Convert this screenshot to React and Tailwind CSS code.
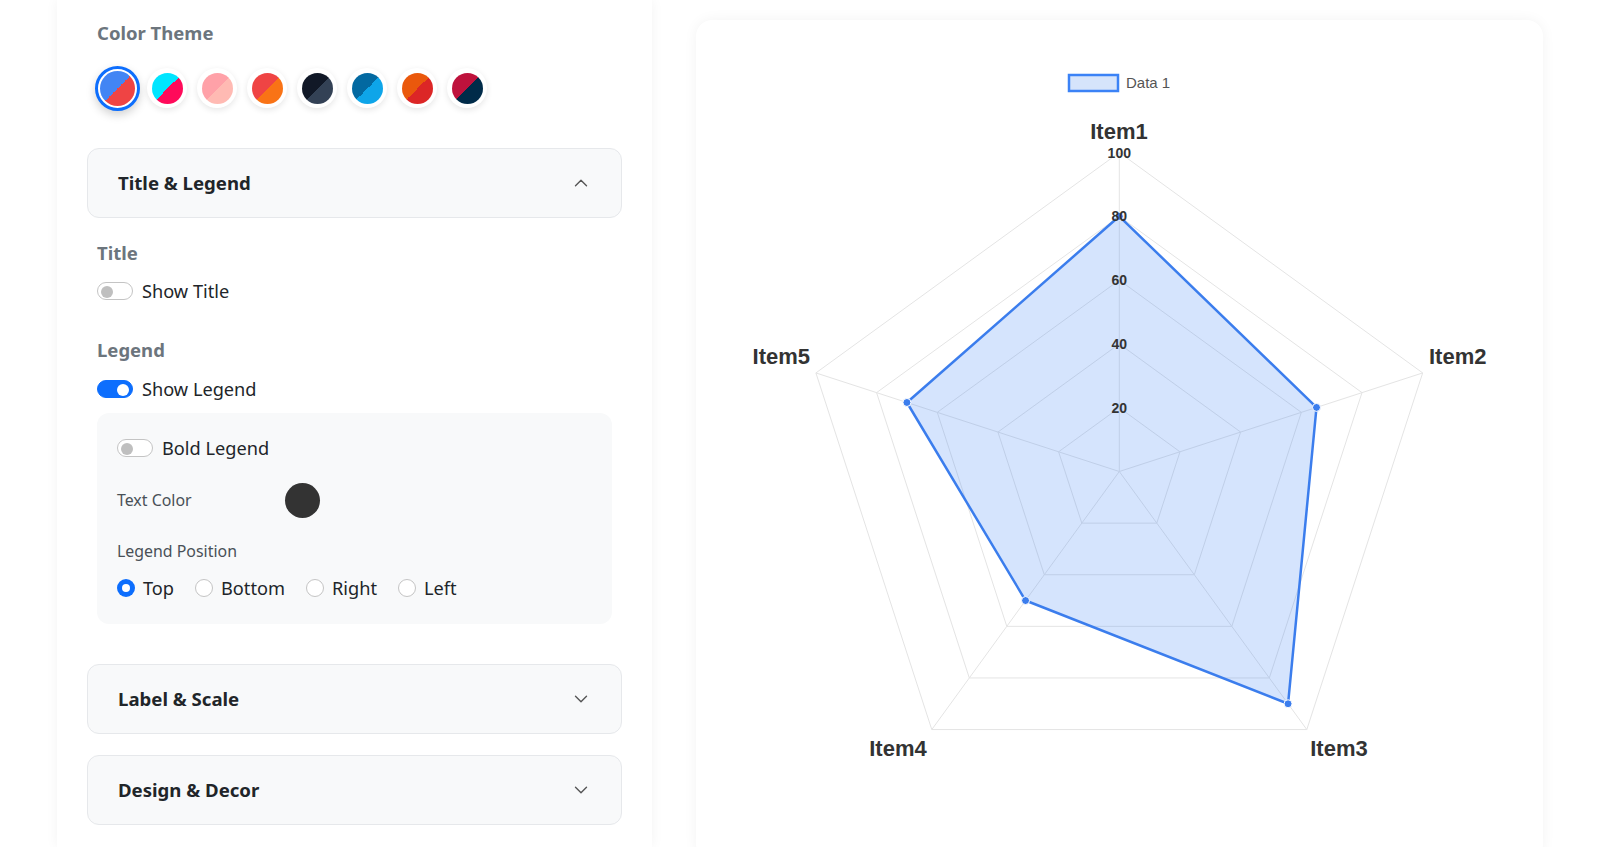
import { ChevronDown, ChevronUp } from 'lucide-react';

const swatches = [
  'bg-[linear-gradient(135deg,#4285f4_50%,#ef4444_50%)]',
  'bg-[linear-gradient(135deg,#00e5ff_50%,#ff0a5a_50%)]',
  'bg-[linear-gradient(135deg,#ffa1a8_50%,#ffbab3_50%)]',
  'bg-[linear-gradient(135deg,#ef4444_50%,#f97316_50%)]',
  'bg-[linear-gradient(135deg,#111827_50%,#334155_50%)]',
  'bg-[linear-gradient(135deg,#0369a1_50%,#0ea5e9_50%)]',
  'bg-[linear-gradient(135deg,#ea580c_50%,#dc2626_50%)]',
  'bg-[linear-gradient(135deg,#be123c_50%,#002b49_50%)]',
];

const Toggle = ({ on }) => (
  <span
    className={`relative inline-block w-[36px] h-[18px] rounded-full border shrink-0 ${
      on ? 'bg-[#0d6efd] border-[#0d6efd]' : 'bg-white border-[#c4c4c4]'
    }`}
  >
    <span
      className={`absolute top-[2.5px] w-[12px] h-[12px] rounded-full ${
        on ? 'right-[3px] bg-white' : 'left-[3px] bg-[#bfbfbf]'
      }`}
    />
  </span>
);

const Radio = ({ checked, label }) => (
  <label className="flex items-center gap-[8px]">
    {checked ? (
      <span className="w-[18px] h-[18px] rounded-full bg-[#0d6efd] flex items-center justify-center">
        <span className="w-[8px] h-[8px] rounded-full bg-white" />
      </span>
    ) : (
      <span className="w-[18px] h-[18px] rounded-full border border-[#c4c4c4] bg-white" />
    )}
    <span className="text-[18.2px] leading-[26px] text-[#212529]">{label}</span>
  </label>
);

const AccordionHeader = ({ title, open }) => (
  <div className="h-[70px] rounded-[12px] border border-[#e6e8eb] bg-[#f8f9fa] flex items-center justify-between pl-[30px] pr-[29px]">
    <span className="text-[18.6px] font-bold text-[#212529]">{title}</span>
    {open ? (
      <ChevronUp size={22} strokeWidth={1.5} className="text-[#555]" />
    ) : (
      <ChevronDown size={22} strokeWidth={1.5} className="text-[#555]" />
    )}
  </div>
);

// radar chart geometry, card-local coords
const CX = 423.3;
const CY = 451.5;
const R = 319;
const values = [80, 65, 90, 50, 70];

const pt = (i, v) => {
  const a = ((-90 + 72 * i) * Math.PI) / 180;
  const r = (v / 100) * R;
  return [CX + r * Math.cos(a), CY + r * Math.sin(a)];
};

const poly = (v) => [0, 1, 2, 3, 4].map((i) => pt(i, v).join(',')).join(' ');

const RadarChart = () => {
  const dataPts = values.map((v, i) => pt(i, v));
  return (
    <svg width="847" height="830" className="block" style={{ fontFamily: '"Liberation Sans", Arial, sans-serif' }}>
      {/* legend */}
      <rect x="373" y="55" width="49" height="16" fill="#d6e4fb" stroke="#3b82f6" strokeWidth="2.5" />
      <text x="430" y="67.5" fontSize="15" fill="#555">Data 1</text>

      {/* grid */}
      {[20, 40, 60, 80, 100].map((v) => (
        <polygon key={v} points={poly(v)} fill="none" stroke="#e4e4e4" strokeWidth="1" />
      ))}
      {[0, 1, 2, 3, 4].map((i) => {
        const [x, y] = pt(i, 100);
        return <line key={i} x1={CX} y1={CY} x2={x} y2={y} stroke="#e4e4e4" strokeWidth="1" />;
      })}

      {/* data */}
      <polygon
        points={dataPts.map((p) => p.join(',')).join(' ')}
        fill="rgba(66,133,244,0.22)"
        stroke="#3b7ded"
        strokeWidth="2.5"
        strokeLinejoin="round"
      />
      {dataPts.map(([x, y], i) => (
        <circle key={i} cx={x} cy={y} r="4" fill="#3b7ded" stroke="#fff" strokeWidth="1" />
      ))}

      {/* ticks */}
      {[20, 40, 60, 80, 100].map((v) => (
        <text
          key={v}
          x={CX}
          y={CY - (v / 100) * R + 5}
          textAnchor="middle"
          fontSize="14"
          fontWeight="bold"
          fill="#333"
        >
          {v}
        </text>
      ))}

      {/* point labels */}
      <g fontSize="22" fontWeight="bold" fill="#333">
        <text x="423" y="119" textAnchor="middle">Item1</text>
        <text x="733" y="343.5">Item2</text>
        <text x="643" y="735.5" textAnchor="middle">Item3</text>
        <text x="202" y="735.5" textAnchor="middle">Item4</text>
        <text x="114" y="343.5" textAnchor="end">Item5</text>
      </g>
    </svg>
  );
};

export default function App() {
  return (
    <div
      className="h-[847px] overflow-hidden bg-white flex pl-[57px] pr-[54px] gap-[44px]"
      style={{ fontFamily: '"Noto Sans", "Open Sans", sans-serif' }}
    >
      {/* settings panel */}
      <div className="w-[595px] shrink-0 bg-white shadow-[0_0_12px_rgba(0,0,0,0.05)] px-[30px] pt-[21px]">
        <div className="px-[10px]">
          <div className="text-[18.5px] leading-[24px] font-bold text-[#6c757d]">Color Theme</div>
          <div className="mt-[20px] h-[46px] flex items-center gap-[10px]">
            {swatches.map((cls, i) => (
              <div key={i} className="w-10 h-10 flex items-center justify-center">
                {i === 0 ? (
                  <span className="w-[45px] h-[45px] shrink-0 rounded-full border-[3px] border-[#0d6efd] bg-white p-[2px] shadow-[0_4px_10px_rgba(0,0,0,0.18)]">
                    <span className={`block w-full h-full rounded-full ${cls}`} />
                  </span>
                ) : (
                  <span className="w-10 h-10 rounded-full bg-white p-[4.5px] shadow-[0_2px_6px_rgba(0,0,0,0.1)]">
                    <span className={`block w-full h-full rounded-full ${cls}`} />
                  </span>
                )}
              </div>
            ))}
          </div>
        </div>

        <div className="mt-[37px]">
          <AccordionHeader title="Title & Legend" open />
          <div className="px-[10px]">
            <div className="mt-[23px] text-[18.5px] leading-[24px] font-bold text-[#6c757d]">Title</div>
            <div className="mt-[13px] flex items-center gap-[9px]">
              <Toggle on={false} />
              <span className="text-[18.2px] leading-[26px] text-[#212529]">Show Title</span>
            </div>

            <div className="mt-[34px] text-[18.5px] leading-[24px] font-bold text-[#6c757d]">Legend</div>
            <div className="mt-[14px] flex items-center gap-[9px]">
              <Toggle on />
              <span className="text-[18.2px] leading-[26px] text-[#212529]">Show Legend</span>
            </div>

            <div className="mt-[11px] rounded-[12px] bg-[#f8f9fa] px-[20px] pt-[22px] pb-[23px]">
              <div className="flex items-center gap-[9px]">
                <Toggle on={false} />
                <span className="text-[18.2px] leading-[26px] text-[#212529]">Bold Legend</span>
              </div>
              <div className="mt-[22px] flex items-center">
                <span className="w-[168px] text-[15.9px] text-[#495057]">Text Color</span>
                <span className="w-[35px] h-[35px] rounded-full bg-[#333]" />
              </div>
              <div className="mt-[22px] text-[15.9px] leading-[22px] text-[#495057]">Legend Position</div>
              <div className="mt-[13px] flex items-center gap-[21px]">
                <Radio checked label="Top" />
                <Radio label="Bottom" />
                <Radio label="Right" />
                <Radio label="Left" />
              </div>
            </div>
          </div>
        </div>

        <div className="mt-[40px]">
          <AccordionHeader title="Label & Scale" />
        </div>
        <div className="mt-[21px]">
          <AccordionHeader title="Design & Decor" />
        </div>
      </div>

      {/* chart card */}
      <div className="flex-1 mt-[20px] h-[840px] rounded-[16px] bg-white shadow-[0_0_14px_rgba(0,0,0,0.05)]">
        <RadarChart />
      </div>
    </div>
  );
}
